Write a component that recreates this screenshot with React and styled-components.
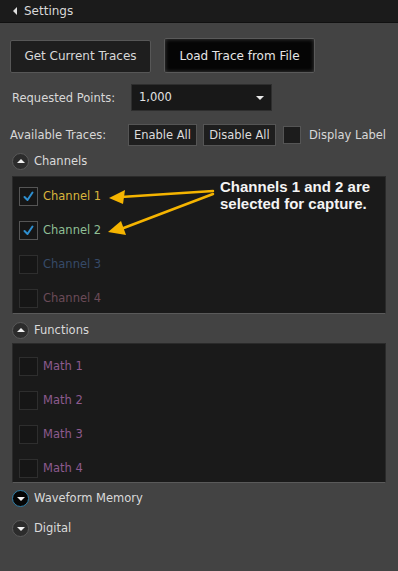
import React from "react";
import styled, { createGlobalStyle } from "styled-components";

const Global = createGlobalStyle`
  html, body { margin: 0; padding: 0; background: #434343; }
  body { font-family: "DejaVu Sans", Verdana, sans-serif; }
  * { box-sizing: border-box; }
`;

const Page = styled.div`
  width: 398px;
  height: 571px;
  background: #434343;
  overflow: hidden;
  position: relative;
`;

const TopBar = styled.div`
  height: 23px;
  background: #1b1b1b;
  border-bottom: 1px solid #111;
  display: flex;
  align-items: center;
  padding-left: 13px;
  gap: 7px;
  color: #d8d8d8;
  font-size: 12px;
`;

const LeftTri = styled.span`
  width: 0;
  height: 0;
  border-top: 4px solid transparent;
  border-bottom: 4px solid transparent;
  border-right: 4px solid #e0e0e0;
`;

const Body = styled.div`
  padding: 16px 12px 0 10px;
  display: flex;
  flex-direction: column;
`;

const ButtonRow = styled.div`
  display: flex;
  gap: 13px;
  align-items: center;
`;

const BigButton = styled.button`
  width: ${(p) => p.$w}px;
  font-family: inherit;
  font-size: 12px;
  color: ${(p) => (p.$dark ? "#e6e6e6" : "#d8d8d8")};
  background: ${(p) => (p.$dark ? "#050505" : "#1e1e1e")};
  border: 1px solid ${(p) => (p.$dark ? "#5a5a5a" : "#575757")};
  border-radius: 2px;
  box-shadow: ${(p) => (p.$dark ? "inset 0 0 4px rgba(255,255,255,0.25)" : "none")};
  padding: 0;
  margin-top: ${(p) => (p.$dark ? "-1px" : "0")};
  height: ${(p) => (p.$dark ? "35px" : "33px")};
`;

const FormRow = styled.div`
  display: flex;
  align-items: center;
  margin-top: ${(p) => p.$mt}px;
  padding-left: ${(p) => p.$pl || 0}px;
`;

const Label = styled.span`
  font-size: 11.5px;
  color: #d8d8d8;
  width: ${(p) => p.$w}px;
`;

const Select = styled.div`
  width: 141px;
  height: 27px;
  background: #181818;
  border: 1px solid #2e2e2e;
  display: flex;
  align-items: center;
  justify-content: space-between;
  padding: 0 7px 2px 7px;
  font-size: 11.5px;
  color: #e2e2e2;
`;

const DownTri = styled.span`
  width: 0;
  height: 0;
  border-left: 4px solid transparent;
  border-right: 4px solid transparent;
  border-top: 4px solid #e8e8e8;
  margin-top: 2px;
`;

const SmallButton = styled.button`
  height: 22px;
  width: ${(p) => p.$w}px;
  font-family: inherit;
  font-size: 11.5px;
  color: #dcdcdc;
  background: #1e1e1e;
  border: 1px solid #555;
  padding: 0;
  margin-right: 6px;
`;

const Box = styled.span`
  width: 18px;
  height: 18px;
  background: #1c1c1c;
  border: 1px solid #555;
  margin-left: 1px;
  margin-right: 8px;
`;

const SectionHeader = styled.div`
  display: flex;
  align-items: center;
  gap: 5px;
  height: 24px;
  margin-top: ${(p) => p.$mt}px;
  padding-left: 2px;
  font-size: 11.5px;
  color: #dadada;
`;

const Toggle = styled.span`
  width: 17px;
  height: 17px;
  border-radius: 50%;
  background: ${(p) => (p.$active ? "#050505" : "#2c2c2c")};
  border: 1px solid ${(p) => (p.$active ? "#2f7fa8" : "#5a5a5a")};
  display: flex;
  align-items: center;
  justify-content: center;
`;

const UpTri = styled.span`
  width: 0;
  height: 0;
  border-left: 4px solid transparent;
  border-right: 4px solid transparent;
  ${(p) =>
    p.$down
      ? "border-top: 4px solid #f0f0f0; margin-top: 1px;"
      : "border-bottom: 4px solid #f0f0f0; margin-bottom: 1px;"}
`;

const ListBox = styled.div`
  position: relative;
  margin-left: 2px;
  width: 374px;
  height: ${(p) => p.$h}px;
  background: #1a1a1a;
  border: 1px solid #2a2a2a;
  border-bottom-color: #5a5a5a;
  padding-top: ${(p) => p.$pt}px;
  margin-top: ${(p) => p.$mt}px;
  display: flex;
  flex-direction: column;
`;

const Item = styled.div`
  height: 34px;
  flex: none;
  display: flex;
  align-items: center;
  padding-left: 6px;
  gap: 5px;
  font-size: 11.5px;
  color: ${(p) => p.$c};
`;

const Check = styled.span`
  width: 19px;
  height: 19px;
  background: #161616;
  border: 1px solid ${(p) => (p.$on ? "#555" : "#2e2e2e")};
  display: flex;
  align-items: center;
  justify-content: center;
`;

const Overlay = styled.svg`
  position: absolute;
  left: 0;
  top: 0;
  pointer-events: none;
`;

const Note = styled.div`
  position: absolute;
  left: 207px;
  top: 1px;
  font-family: "Liberation Sans", Arial, sans-serif;
  font-weight: bold;
  font-size: 15px;
  line-height: 17px;
  color: #f4f4f4;
`;

const CheckMark = () => (
  <svg width="13" height="13" viewBox="0 0 13 13">
    <path d="M2.5 7 L5.5 10 L10.5 2.5" fill="none" stroke="#2e8fd0" strokeWidth="2" strokeLinecap="round" strokeLinejoin="round" />
  </svg>
);

const channels = [
  { name: "Channel 1", c: "#d9b53c", on: true },
  { name: "Channel 2", c: "#8fbf95", on: true },
  { name: "Channel 3", c: "#364a68", on: false },
  { name: "Channel 4", c: "#6b4b58", on: false },
];

const maths = ["Math 1", "Math 2", "Math 3", "Math 4"];

export default function App() {
  return (
    <Page>
      <Global />
      <TopBar>
        <LeftTri />
        Settings
      </TopBar>
      <Body>
        <ButtonRow>
          <BigButton $w={141}>Get Current Traces</BigButton>
          <BigButton $w={151} $dark>Load Trace from File</BigButton>
        </ButtonRow>
        <FormRow $mt={11} $pl={2}>
          <Label $w={119}>Requested Points:</Label>
          <Select>
            1,000
            <DownTri />
          </Select>
        </FormRow>
        <FormRow $mt={13}>
          <Label $w={118}>Available Traces:</Label>
          <SmallButton $w={69}>Enable All</SmallButton>
          <SmallButton $w={73}>Disable All</SmallButton>
          <Box />
          <Label>Display Label</Label>
        </FormRow>
        <SectionHeader $mt={3}>
          <Toggle><UpTri /></Toggle>
          Channels
        </SectionHeader>
        <ListBox $mt={3} $h={138} $pt={2}>
          {channels.map((ch) => (
            <Item key={ch.name} $c={ch.c}>
              <Check $on={ch.on}>{ch.on && <CheckMark />}</Check>
              {ch.name}
            </Item>
          ))}
          <Overlay width="374" height="138" viewBox="0 0 374 138">
            <g stroke="#f5b400" strokeWidth="2.5" fill="#f5b400" strokeLinecap="round">
              <line x1="200" y1="14" x2="108" y2="20" />
              <line x1="200" y1="17" x2="108" y2="52" />
              <polygon points="96,21 112,13 110,27" stroke="none" />
              <polygon points="95,55 108,44 113,58" stroke="none" />
            </g>
          </Overlay>
          <Note>
            Channels 1 and 2 are
            <br />
            selected for capture.
          </Note>
        </ListBox>
        <SectionHeader $mt={4}>
          <Toggle><UpTri /></Toggle>
          Functions
        </SectionHeader>
        <ListBox $mt={1} $h={140} $pt={5}>
          {maths.map((m) => (
            <Item key={m} $c="#8d5a8e">
              <Check>{null}</Check>
              {m}
            </Item>
          ))}
        </ListBox>
        <SectionHeader $mt={3}>
          <Toggle $active><UpTri $down /></Toggle>
          Waveform Memory
        </SectionHeader>
        <SectionHeader $mt={6}>
          <Toggle><UpTri $down /></Toggle>
          Digital
        </SectionHeader>
      </Body>
    </Page>
  );
}
